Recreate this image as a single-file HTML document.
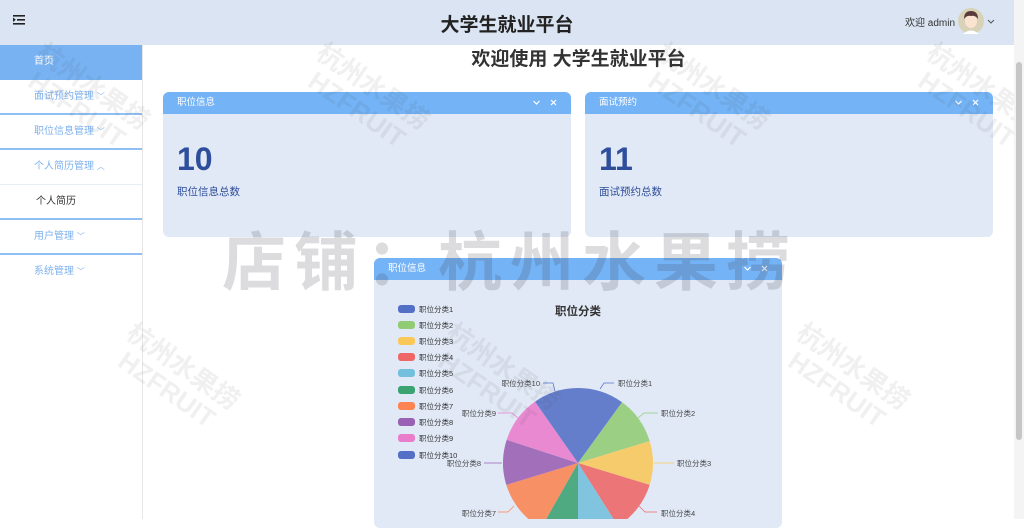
<!DOCTYPE html>
<html><head><meta charset="utf-8"><style>
*{margin:0;padding:0;box-sizing:border-box}
body{width:1024px;height:519px;overflow:hidden;background:#fff;font-family:"Liberation Sans","Noto Sans CJK SC",sans-serif;position:relative}
.hdr{position:absolute;left:0;top:0;width:1014px;height:45px;background:#dae4f2}
.hdr .t{position:absolute;left:0;width:1014px;top:10px;text-align:center;font-size:19px;font-weight:bold;color:#222}
.side{position:absolute;left:0;top:45px;width:143px;height:474px;background:#fff;border-right:1px solid #e6e6e6}
.it{height:35px;line-height:33px;padding-left:34px;font-size:10px;color:#7fb2ee;border-bottom:2px solid #8fc0f5}
.it.on{background:#78b2f2;color:#fff;border:none;height:35px}
.it.sub{color:#333;border-bottom:2px solid #8fc0f5;padding-left:36px}
.it.op{border-bottom:1px solid #e8eef6}
.car{font-size:8px}
.title{position:absolute;left:143px;width:871px;top:44px;text-align:center;font-size:19px;font-weight:bold;color:#333}
.card{position:absolute;background:#e1e9f6;border-radius:6px;overflow:hidden}
.card .h{height:22px;background:#74b3f6;color:#fff;font-size:9.5px;line-height:22px;padding-left:14px;position:relative}
.card .h svg{position:absolute;right:14px;top:7px}
.num{position:absolute;left:14px;top:49px;font-size:32px;font-weight:bold;color:#2e4d9b}
.lab{position:absolute;left:14px;top:92px;font-size:10.5px;color:#2e4d9b}
.sb{position:absolute;left:1014px;top:0;width:10px;height:519px;background:#f4f4f4}
.sb div{position:absolute;left:2px;top:62px;width:6px;height:378px;background:#c6c6c6;border-radius:3px}
.wm{position:absolute;left:222px;top:212px;font-size:64px;font-weight:bold;color:rgba(60,60,70,0.18);letter-spacing:8px;white-space:nowrap}
.wm2{position:absolute;font-size:26px;font-weight:bold;color:rgba(60,60,70,0.08);transform:rotate(35deg);white-space:nowrap;line-height:28px;text-align:center}
</style></head><body>
<div class="hdr">
<svg style="position:absolute;left:13px;top:15px" width="12" height="10"><rect x="0" y="0" width="12" height="1.6" fill="#222"/><rect x="4" y="4" width="8" height="1.6" fill="#222"/><rect x="0" y="8" width="12" height="1.6" fill="#222"/><path d="M0 2.5L2.8 4.8L0 7z" fill="#222"/></svg>
<div class="t">大学生就业平台</div>
<div style="position:absolute;left:905px;top:14px;font-size:10px;color:#333">欢迎 admin</div>
<svg style="position:absolute;left:957px;top:7px" width="38" height="28"><circle cx="14" cy="14" r="13" fill="#d8d3b8"/><ellipse cx="14" cy="14" rx="6" ry="7" fill="#fbe3d2"/><path d="M7 12Q7 4 14 4Q21 4 21 12Q18 8 14 9Q10 8 7 12z" fill="#5a3a3a"/><path d="M6 27Q14 20 22 27z" fill="#fff"/><path d="M31 13l3 3l3-3" stroke="#555" fill="none" stroke-width="1"/></svg>
</div>
<div class="side">
<div class="it on">首页</div>
<div class="it">面试预约管理 <span class="car">﹀</span></div>
<div class="it">职位信息管理 <span class="car">﹀</span></div>
<div class="it op">个人简历管理 <span class="car">︿</span></div>
<div class="it sub">个人简历</div>
<div class="it">用户管理 <span class="car">﹀</span></div>
<div class="it" style="border:none">系统管理 <span class="car">﹀</span></div>
</div>
<div class="title">欢迎使用 大学生就业平台</div>
<div class="card" style="left:163px;top:92px;width:408px;height:145px"><div class="h">职位信息<svg width="24" height="8"><path d="M0.5 2l3 3l3-3M18 1l5 5M23 1l-5 5" stroke="#fff" stroke-width="1.2" fill="none"/></svg></div><div class="num">10</div><div class="lab">职位信息总数</div></div>
<div class="card" style="left:585px;top:92px;width:408px;height:145px"><div class="h">面试预约<svg width="24" height="8"><path d="M0.5 2l3 3l3-3M18 1l5 5M23 1l-5 5" stroke="#fff" stroke-width="1.2" fill="none"/></svg></div><div class="num">11</div><div class="lab">面试预约总数</div></div>
<div class="card" style="left:374px;top:258px;width:408px;height:270px"><div class="h">职位信息<svg width="24" height="8"><path d="M0.5 2l3 3l3-3M18 1l5 5M23 1l-5 5" stroke="#fff" stroke-width="1.2" fill="none"/></svg></div></div>
<svg style="position:absolute;left:0;top:0" width="1024" height="519" font-family="Liberation Sans,Noto Sans CJK SC,sans-serif">
<text x="578" y="315" font-size="11.5" font-weight="bold" fill="#333" text-anchor="middle">职位分类</text>
<g font-size="7.5" fill="#333">
<rect x="398" y="305" width="17" height="8" rx="3" fill="#5470c6"/><text x="419" y="312">职位分类1</text>
<rect x="398" y="321" width="17" height="8" rx="3" fill="#91cc75"/><text x="419" y="328">职位分类2</text>
<rect x="398" y="337" width="17" height="8" rx="3" fill="#fac858"/><text x="419" y="344">职位分类3</text>
<rect x="398" y="353" width="17" height="8" rx="3" fill="#ee6666"/><text x="419" y="360">职位分类4</text>
<rect x="398" y="369" width="17" height="8" rx="3" fill="#73c0de"/><text x="419" y="376">职位分类5</text>
<rect x="398" y="386" width="17" height="8" rx="3" fill="#3ba272"/><text x="419" y="393">职位分类6</text>
<rect x="398" y="402" width="17" height="8" rx="3" fill="#fc8452"/><text x="419" y="409">职位分类7</text>
<rect x="398" y="418" width="17" height="8" rx="3" fill="#9a60b4"/><text x="419" y="425">职位分类8</text>
<rect x="398" y="434" width="17" height="8" rx="3" fill="#ea7ccc"/><text x="419" y="441">职位分类9</text>
<rect x="398" y="451" width="17" height="8" rx="3" fill="#5470c6"/><text x="419" y="458">职位分类10</text>
</g>
<g opacity="0.88">
<path d="M578 463L578 388A75 75 0 0 1 622.1 402.3z" fill="#5470c6"/>
<path d="M578 463L622.1 402.3A75 75 0 0 1 649.7 441.1z" fill="#91cc75"/>
<path d="M578 463L649.7 441.1A75 75 0 0 1 649.7 484.9z" fill="#fac858"/>
<path d="M578 463L649.7 484.9A75 75 0 0 1 618 526z" fill="#ee6666"/>
<path d="M578 463L618 526A75 75 0 0 1 578 538z" fill="#73c0de"/>
<path d="M578 463L578 538A75 75 0 0 1 541 528z" fill="#3ba272"/>
<path d="M578 463L541 528A75 75 0 0 1 506.3 484.9z" fill="#fc8452"/>
<path d="M578 463L506.3 484.9A75 75 0 0 1 506.7 439.8z" fill="#9a60b4"/>
<path d="M578 463L506.7 439.8A75 75 0 0 1 535 401.6z" fill="#ea7ccc"/>
<path d="M578 463L535 401.6A75 75 0 0 1 578 388z" fill="#5470c6"/>
</g>
<g font-size="7.5" fill="#333" stroke-width="0.7" fill-opacity="0.9">
<path d="M600 389l4-6h10" stroke="#5470c6" fill="none"/><text x="618" y="386">职位分类1</text>
<path d="M638 418l6-5h14" stroke="#91cc75" fill="none"/><text x="661" y="416">职位分类2</text>
<path d="M654 463h20" stroke="#fac858" fill="none"/><text x="677" y="466">职位分类3</text>
<path d="M639 506l6 6h12" stroke="#ee6666" fill="none"/><text x="661" y="516">职位分类4</text>
<path d="M555 391l-2-8h-10" stroke="#5470c6" fill="none"/><text x="540" y="386" text-anchor="end">职位分类10</text>
<path d="M518 418l-6-5h-14" stroke="#ea7ccc" fill="none"/><text x="496" y="416" text-anchor="end">职位分类9</text>
<path d="M502 463h-18" stroke="#9a60b4" fill="none"/><text x="481" y="466" text-anchor="end">职位分类8</text>
<path d="M514 506l-6 6h-10" stroke="#fc8452" fill="none"/><text x="496" y="516" text-anchor="end">职位分类7</text>
</g>
</svg>
<div class="wm">店铺：杭州水果捞</div>
<div class="wm2" style="left:20px;top:70px">杭州水果捞<br>HZFRUIT</div>
<div class="wm2" style="left:300px;top:70px">杭州水果捞<br>HZFRUIT</div>
<div class="wm2" style="left:640px;top:70px">杭州水果捞<br>HZFRUIT</div>
<div class="wm2" style="left:910px;top:70px">杭州水果捞<br>HZFRUIT</div>
<div class="wm2" style="left:110px;top:350px">杭州水果捞<br>HZFRUIT</div>
<div class="wm2" style="left:430px;top:350px">杭州水果捞<br>HZFRUIT</div>
<div class="wm2" style="left:780px;top:350px">杭州水果捞<br>HZFRUIT</div>
<div class="sb"><div></div></div>
</body></html>
